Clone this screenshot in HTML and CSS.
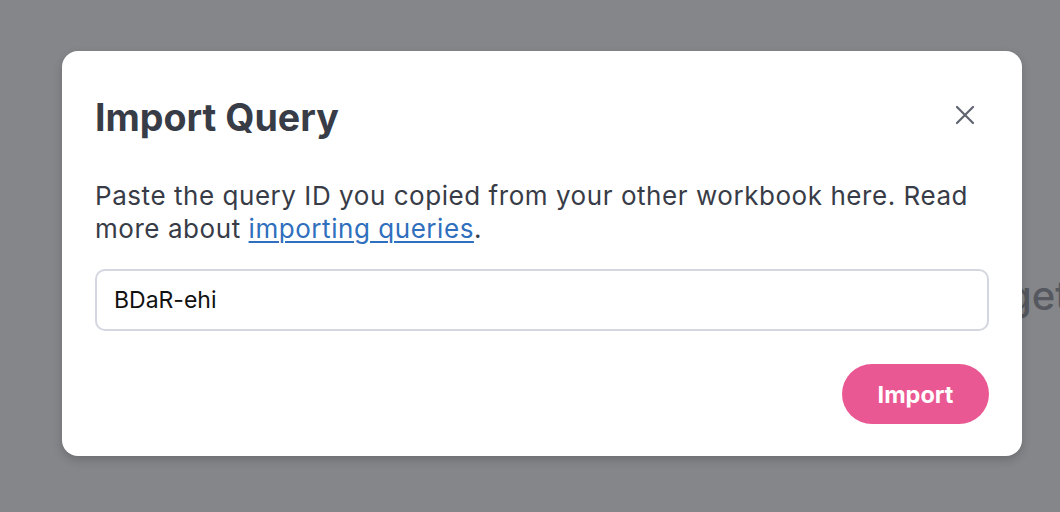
FILE: index.html
```html
<!DOCTYPE html>
<html lang="en">
<head>
<meta charset="utf-8">
<title>Import Query</title>
<link rel="stylesheet" href="styles.css">
</head>
<body>
<div class="backdrop">
  <span class="bg-text">Budget</span>
</div>
<div class="overlay">
  <div class="modal" role="dialog" aria-labelledby="modal-title">
    <div class="modal-header">
      <h2 class="modal-title" id="modal-title">Import Query</h2>
      <button class="close-btn" aria-label="Close">
        <svg width="20" height="20" viewBox="0 0 20 20" fill="none" stroke="#5f6471" stroke-width="2.2" stroke-linecap="round"><path d="M2 2L18 18M18 2L2 18"/></svg>
      </button>
    </div>
    <p class="modal-text">Paste the query ID you copied from your other workbook here. Read more about <a class="link" href="#">importing queries</a>.</p>
    <input class="query-input" type="text" value="BDaR-ehi">
    <div class="modal-footer">
      <button class="import-btn">Import</button>
    </div>
  </div>
</div>
</body>
</html>
```

FILE: styles.css
```css
html, body {
  margin: 0;
  padding: 0;
  width: 1060px;
  height: 512px;
  overflow: hidden;
  background: #85868a;
  font-family: Inter, "Noto Sans", sans-serif;
}
.backdrop {
  position: absolute;
  inset: 0;
}
.bg-text {
  position: absolute;
  left: 932px;
  top: 272px;
  font-size: 40px;
  line-height: 48px;
  color: #56585f;
  font-weight: 500;
}
.overlay {
  position: absolute;
  inset: 0;
  padding: 51px 0 0 62px;
}
.modal {
  width: 960px;
  height: 405px;
  box-sizing: border-box;
  background: #ffffff;
  border-radius: 16px;
  box-shadow: 0 4px 10px rgba(0, 0, 0, 0.18);
  padding: 42px 33px 0 33px;
  display: flex;
  flex-direction: column;
}
.modal-header {
  display: flex;
  align-items: center;
  justify-content: space-between;
  height: 48px;
}
.modal-title {
  margin: 0;
  font-size: 37.6px;
  font-weight: 700;
  color: #383c47;
  letter-spacing: 0;
}
.close-btn {
  border: 0;
  background: transparent;
  padding: 0;
  margin-right: 14px;
  margin-bottom: 4px;
  width: 20px;
  height: 20px;
  display: flex;
  cursor: pointer;
}
.modal-text {
  margin: 38px 0 0 0;
  font-size: 26px;
  letter-spacing: 0.55px;
  line-height: 33px;
  color: #383c47;
}
.link {
  color: #2f6fbd;
  text-decoration: underline;
  text-underline-offset: 3px;
  text-decoration-thickness: 1.5px;
}
.query-input {
  margin-top: 24px;
  height: 62px;
  box-sizing: border-box;
  width: 100%;
  border: 2px solid #d4d7e1;
  border-radius: 10px;
  padding: 0 17px;
  font-family: Inter, "Noto Sans", sans-serif;
  font-size: 23px;
  color: #111111;
  outline: none;
}
.modal-footer {
  display: flex;
  justify-content: flex-end;
  margin-top: 33px;
}
.import-btn {
  width: 147px;
  height: 60px;
  border: 0;
  border-radius: 30px;
  background: #ea5893;
  color: #ffffff;
  font-family: Inter, "Noto Sans", sans-serif;
  font-size: 23.5px;
  font-weight: 700;
  cursor: pointer;
}
```
